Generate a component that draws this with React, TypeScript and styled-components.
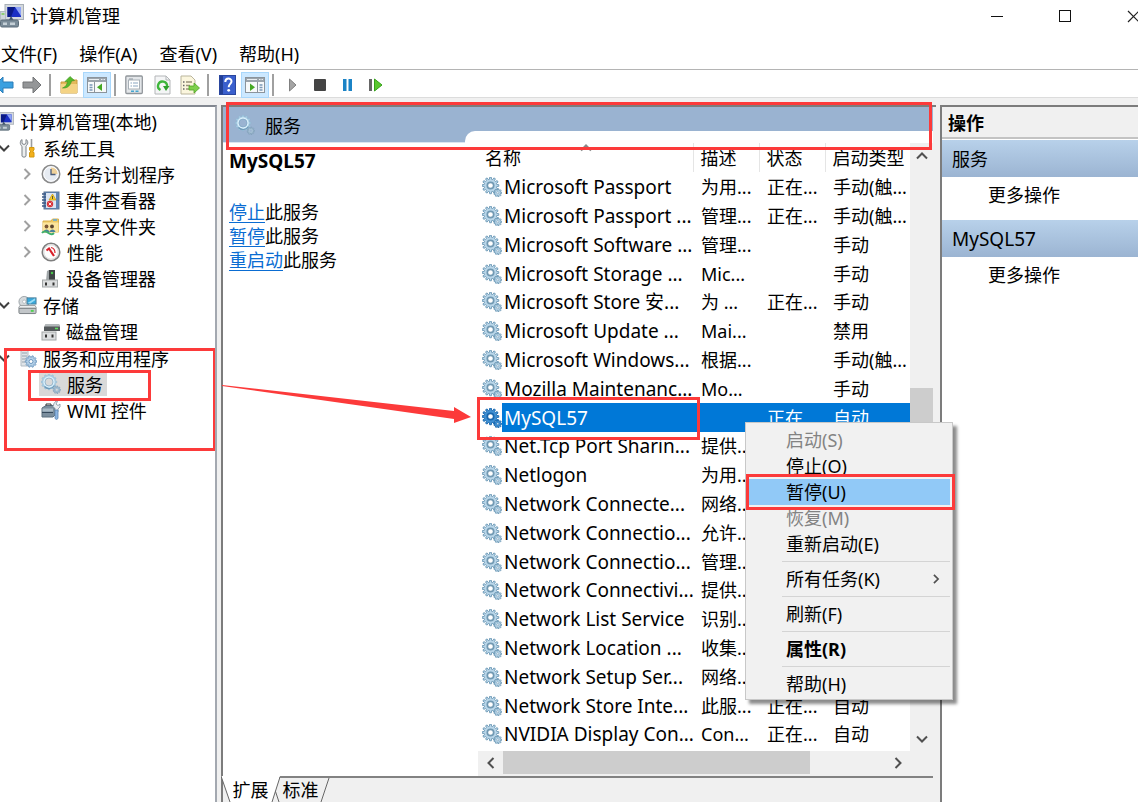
import React from "react";
import styled, { createGlobalStyle, css } from "styled-components";

const GlobalStyle = createGlobalStyle`
  * { box-sizing: border-box; }
  body {
    margin: 0;
    overflow: hidden;
    background: #fff;
    color: #000;
    font-family: "Noto Sans", "Noto Sans CJK SC", sans-serif;
    font-size: 18px;
  }
  button {
    font: inherit;
    color: inherit;
    background: none;
    border: 0;
    padding: 0;
  }
  svg { display: block; flex: none; }
  ul { list-style: none; margin: 0; padding: 0; }
`;

const markRed = "#fc3a3a";

/* ---------- window frame ---------- */

const Window = styled.div`
  position: relative;
  display: flex;
  flex-direction: column;
  height: 100vh;
  overflow: hidden;
`;

const TitleBar = styled.header`
  display: flex;
  align-items: center;
  height: 32px;
`;

const Title = styled.h1`
  flex: 1;
  margin: 0 0 0 6px;
  font-size: 18px;
  line-height: 32px;
  font-weight: 400;
`;

const WindowControls = styled.div`
  display: flex;
  margin-right: -29px;
`;

const ControlButton = styled.button`
  display: grid;
  place-items: center;
  width: 68px;
  height: 30px;
`;

const MenuBar = styled.nav`
  display: flex;
  gap: 22px;
  height: 38px;
  padding: 6px 1px 0;
  border-bottom: 1px solid #b4b4b4;
`;

const MenuBarItem = styled.button`
  height: 32px;
  line-height: 32px;
`;

const ToolBar = styled.div`
  display: flex;
  align-items: center;
  height: 28px;
  padding-top: 2px;
  margin-left: -10px;
  border-bottom: 1px solid #dcdcdc;
`;

const ToolButton = styled.button<{ $active?: boolean }>`
  display: grid;
  place-items: center;
  width: 28px;
  height: 26px;
  ${(p) => p.$active && css`
    background: #cce8ff;
    border: 1px solid #a9d7fb;
  `}
`;

const ToolDivider = styled.span`
  width: 2px;
  height: 22px;
  margin: 0 4px 0 3px;
  background: #a0a0a0;
`;

const Workspace = styled.main`
  flex: 1;
  min-height: 0;
  display: flex;
  gap: 4px;
  padding-top: 7px;
  background: #f0f0f0;
`;

/* ---------- navigation tree ---------- */

const TreePane = styled.nav`
  width: 217px;
  padding-top: 1px;
  overflow: hidden;
  background: #fff;
  border-top: 2px solid #828790;
  border-right: 2px solid #a3a8b0;
`;

const TreeList = styled.ul`
  display: flex;
  flex-direction: column;
  gap: 1px;
  margin-left: -29px;
`;

const TreeGroup = styled.li`
  position: relative;
`;

const TreeRow = styled.div<{ $depth: number }>`
  display: flex;
  align-items: center;
  height: 26px;
  padding-left: ${(p) => p.$depth * 23}px;
`;

const TreeToggle = styled.button`
  display: grid;
  place-items: center;
  width: 20px;
  height: 24px;
  margin-right: 2px;
`;

const TreeLabel = styled.a<{ $selected?: boolean }>`
  display: flex;
  align-items: center;
  gap: 6px;
  height: 24px;
  padding: 0 4px 0 2px;
  color: #000;
  text-decoration: none;
  white-space: nowrap;
  background: ${(p) => (p.$selected ? "#d9d9d9" : "transparent")};
`;

const Mark = styled.div<{ $top: number; $left: number; $width: number; $height: number }>`
  position: absolute;
  z-index: 3;
  top: ${(p) => p.$top}px;
  left: ${(p) => p.$left}px;
  width: ${(p) => p.$width}px;
  height: ${(p) => p.$height}px;
  border: 3px solid ${markRed};
  pointer-events: none;
`;

const TreeMarks = styled.div`
  position: absolute;
  z-index: 3;
  top: 0;
  left: 0;
`;

/* ---------- centre pane ---------- */

const CenterPane = styled.section`
  flex: 1;
  min-width: 0;
  display: flex;
  flex-direction: column;
  border-left: 2px solid #7c7c7c;
  border-top: 2px solid #7c7c7c;
`;

const Banner = styled.div`
  position: relative;
  display: flex;
  height: 36px;
  background: #9ab3d1;
  margin-right: 3px;
`;

const BannerTitle = styled.h2`
  display: flex;
  align-items: center;
  gap: 10px;
  width: 242px;
  margin: 0;
  padding-left: 12px;
  font-size: 18px;
  font-weight: 400;
  border-bottom: 1px solid #dbe5f0;
`;

const BannerTab = styled.div`
  flex: 1;
  align-self: flex-end;
  height: 12px;
  background: #fff;
  border-top-left-radius: 10px;
`;

const BannerMark = styled.div`
  position: absolute;
  z-index: 3;
  inset: -5px 1px -7px 3px;
  border: 3px solid ${markRed};
  pointer-events: none;
`;

const CenterBody = styled.div`
  flex: 1;
  min-height: 0;
  display: flex;
  margin-right: 3px;
  background: #fff;
  border-bottom: 2px solid #828282;
`;

const Description = styled.div`
  width: 255px;
  padding: 6px 6px 0;
  line-height: 24px;
`;

const ServiceName = styled.h3`
  margin: 0 0 27px;
  font-size: 19px;
  line-height: 24px;
  font-weight: 700;
`;

const ActionLine = styled.p`
  margin: 0;
  a {
    color: #0a6cd2;
    text-decoration: underline;
    text-underline-offset: 3px;
  }
`;

const ListPane = styled.div`
  position: relative;
  flex: 1;
  min-width: 0;
  display: flex;
  flex-direction: column;
  padding-bottom: 2px;
  background: #f0f0f0;
`;

const ListTop = styled.div`
  flex: 1;
  min-height: 0;
  display: flex;
`;

const TableWrap = styled.div`
  flex: 1;
  min-width: 0;
  background: #fff;
`;

const ServiceTable = styled.table`
  width: 100%;
  table-layout: fixed;
  border-collapse: collapse;
  white-space: nowrap;
`;

const HeadCell = styled.th<{ $width?: number }>`
  position: relative;
  height: 29px;
  width: ${(p) => (p.$width ? `${p.$width}px` : "auto")};
  padding: 0 0 0 7px;
  line-height: 28px;
  text-align: left;
  font-weight: 400;
  border-right: 1px solid #e5e5e5;
  &:last-child { border-right: 0; }
`;

const SortCaret = styled.span`
  position: absolute;
  top: -1px;
  left: 102px;
`;

const Row = styled.tr<{ $selected?: boolean }>`
  height: 29px;
  color: ${(p) => (p.$selected ? "#fff" : "#000")};
  td { background: ${(p) => (p.$selected ? "#0078d7" : "transparent")}; }
  &:nth-child(5n) { height: 28px; }
`;

const Cell = styled.td`
  padding: 0 0 0 8px;
  line-height: 28px;
`;

const NameCell = styled.th<{ $selected?: boolean }>`
  position: relative;
  padding: 0 0 0 4px;
  font-size: 19px;
  line-height: 28px;
  text-align: left;
  font-weight: 400;
  background: ${(p) => (p.$selected ? "linear-gradient(to right, #fff 24px, #0078d7 24px)" : "none")};
`;

const NameContent = styled.div`
  display: flex;
  align-items: center;
  gap: 2px;
  height: 28px;
`;

const VScroll = styled.div`
  display: flex;
  flex-direction: column;
  width: 23px;
  background: #f0f0f0;
`;

const HScroll = styled.div`
  display: flex;
  height: 23px;
  margin-right: 23px;
  background: #f0f0f0;
`;

const ScrollButton = styled.button<{ $side?: boolean }>`
  display: grid;
  place-items: center;
  width: ${(p) => (p.$side ? 25 : 23)}px;
  height: ${(p) => (p.$side ? 23 : 25)}px;
`;

const Track = styled.div<{ $grow: number; $thumb?: boolean }>`
  flex: ${(p) => p.$grow} 1 0;
  background: ${(p) => (p.$thumb ? "#cdcdcd" : "transparent")};
`;

const ViewTabs = styled.div`
  display: flex;
  height: 24px;
`;

const ViewTab = styled.button<{ $front?: boolean }>`
  position: relative;
  z-index: ${(p) => (p.$front ? 1 : 0)};
  width: 59px;
  height: ${(p) => (p.$front ? 26 : 24)}px;
  margin-left: ${(p) => (p.$front ? -2 : -9)}px;
  margin-top: ${(p) => (p.$front ? -2 : 0)}px;
  padding: ${(p) => (p.$front ? 2 : 0)}px 0 0;
  line-height: 24px;
  svg { position: absolute; z-index: -1; top: 0; left: 0; }
`;

/* ---------- context menu ---------- */

const ContextMenu = styled.div`
  position: absolute;
  z-index: 2;
  top: 279px;
  right: -20px;
  width: 208px;
  padding: 4px 2px 2px;
  color: #000;
  background: #f1f1f1;
  border: 1px solid #c8c8c8;
  box-shadow: 4px 4px 3px rgba(0, 0, 0, 0.45);
`;

const MenuItem = styled.button<{ $hot?: boolean; $strong?: boolean }>`
  position: relative;
  display: flex;
  align-items: center;
  justify-content: space-between;
  width: 100%;
  height: 26px;
  padding: 0 9px 0 38px;
  line-height: 26px;
  font-weight: ${(p) => (p.$strong ? 700 : 400)};
  background: ${(p) => (p.$hot ? "#91c9f7" : "transparent")};
  &:disabled { color: #838383; }
`;

const MenuDivider = styled.hr`
  height: 1px;
  margin: 4px 0 4px 34px;
  border: 0;
  background: #d4d4d4;
`;

/* ---------- actions pane ---------- */

const ActionsPane = styled.aside`
  width: 198px;
  background: #fff;
  border-left: 2px solid #7c7c7c;
  border-top: 2px solid #7c7c7c;
`;

const ActionsHeader = styled.h2`
  height: 32px;
  margin: 0 0 1px;
  padding-left: 6px;
  font-size: 18px;
  line-height: 32px;
  font-weight: 700;
  background: #f0f0f0;
  border-bottom: 2px solid #c3c3c3;
`;

const ActionsBand = styled.h3<{ $latin?: boolean }>`
  height: 37px;
  margin: 0;
  padding-left: 10px;
  font-size: ${(p) => (p.$latin ? 19 : 18)}px;
  line-height: 38px;
  font-weight: 400;
  background: linear-gradient(#b8d1ea, #9bb4d2);
`;

const ActionsItem = styled.button`
  display: block;
  height: 37px;
  margin: 0 0 6px;
  padding-left: 46px;
  line-height: 37px;
`;

const PointerSvg = styled.svg`
  position: absolute;
  z-index: 3;
  top: 380px;
  left: 222px;
  pointer-events: none;
`;

/* ---------- icons ---------- */

const Chevron = ({ dir, color = "#505050", size = 12 }: { dir: "up" | "down" | "left" | "right"; color?: string; size?: number }) => {
  const paths = {
    up: "M1 8.500L6 3.500L11 8.500",
    down: "M1 3.500L6 8.500L11 3.500",
    left: "M8.500 1L3.500 6L8.500 11",
    right: "M3.500 1L8.500 6L3.500 11",
  };
  return (
    <svg width={size} height={size} viewBox="0 0 12 12">
      <path d={paths[dir]} fill="none" stroke={color} strokeWidth="2" />
    </svg>
  );
};

/* Outline of a cog wheel: each tooth is four points between the root and tip circles. */
const cog = (cx: number, cy: number, tip: number, root: number, teeth: number) => {
  const step = (Math.PI * 2) / teeth;
  const points: string[] = [];
  for (let i = 0; i < teeth; i++) {
    const offsets: Array<[number, number]> = [[-0.32, root], [-0.2, tip], [0.2, tip], [0.32, root]];
    for (const [o, r] of offsets) {
      const a = (i + o) * step;
      points.push(`${(cx + r * Math.cos(a)).toFixed(2)} ${(cy + r * Math.sin(a)).toFixed(2)}`);
    }
  }
  return `M${points.join("L")}z`;
};
const bigCog = cog(8.5, 8.5, 8.3, 6.3, 12);
const smallCog = cog(15.8, 15.8, 4, 2.8, 9);

const GearsIcon = ({ tone = "#6c98b6", fill = "#b9d6e9", ring = "#7199b3", hole = "#fff" }: { tone?: string; fill?: string; ring?: string; hole?: string }) => (
  <svg width="20" height="20" viewBox="0 0 20 20">
    <path d={bigCog} fill={fill} stroke={tone} strokeWidth="0.900" />
    <circle cx="8.500" cy="8.500" r="3.200" fill={hole} stroke={ring} strokeWidth="1.700" />
    <path d={smallCog} fill={fill} stroke={tone} strokeWidth="0.900" />
    <circle cx="15.800" cy="15.800" r="1.100" fill={hole} stroke={ring} strokeWidth="0.600" />
  </svg>
);

const SoftGearsIcon = ({ hole }: { hole: string }) => (
  <svg width="20" height="20" viewBox="0 0 20 20">
    <path d={cog(8, 8, 7.8, 6.4, 12)} fill="#a9cde4" stroke="#8db6d1" strokeWidth="0.500" />
    <circle cx="8" cy="8" r="4.900" fill={hole} stroke="#d9effb" strokeWidth="1.600" />
    <circle cx="8" cy="8" r="4" fill="none" stroke="#7fa8c4" strokeWidth="0.700" />
    <path d="M3.500 12.500A6.300 6.300 0 0 0 13.500 11.500" fill="none" stroke="#6f9ab8" strokeWidth="1.200" />
    <path d={cog(15.8, 15.8, 3.8, 2.6, 9)} fill="#a3bfd3" stroke="#7f9fb7" strokeWidth="0.700" />
    <circle cx="15.800" cy="15.800" r="1" fill={hole} />
  </svg>
);

const ComputerIcon = ({ size = 24 }: { size?: number }) => (
  <svg width={size} height={size} viewBox="0 0 24 24">
    <rect x="5" y="0.500" width="18.500" height="15" fill="#d4d9de" stroke="#a8afb6" />
    <rect x="7.500" y="3" width="13.500" height="10" fill="#1a2fc4" />
    <path d="M7.500 3H15L11 13H7.500z" fill="#0b1a86" />
    <path d="M15 3h6v9z" fill="#8ea3f5" />
    <path d="M7 20l4-8 5 8z" fill="#40566c" />
    <rect x="0.500" y="7.500" width="5" height="9" fill="#cfd6da" stroke="#b3bdc2" />
    <rect x="1.500" y="9" width="3" height="2" fill="#8fcf76" />
    <rect x="0.500" y="16" width="18" height="7" rx="1.500" fill="#7b8c99" stroke="#5c6d7a" />
    <path d="M3 18.500h4v2.500H3zM10 18.500h5v2.500h-5z" fill="#c5d0d7" />
  </svg>
);

const ToolsIcon = () => (
  <svg width="19" height="20" viewBox="0 0 19 20">
    <path d="M4 1.500v4l2 1 2-1V1.500c2 1 2.500 4 .5 6l-.5.800V18c0 1.500-4 1.500-4 0V8.300C1.500 6.500 2 2.500 4 1.500z" fill="#eceeef" stroke="#7d8388" />
    <path d="M13.500 1v9" stroke="#9a9d9f" strokeWidth="1.600" />
    <path d="M11.500 9.500h4.500V12l-1 1v1.500h1V19h-4.500v-4.500h1V13l-1-1z" fill="#f2b01c" stroke="#d4990f" />
  </svg>
);

const ClockIcon = () => (
  <svg width="20" height="20" viewBox="0 0 20 20">
    <circle cx="10" cy="10" r="8.700" fill="#e6ebf2" stroke="#8a8a8a" strokeWidth="1.600" />
    <path d="M10 10V3a7 7 0 0 1 7 7z" fill="#efd19a" />
    <circle cx="10" cy="10" r="7.200" fill="none" stroke="#fff" />
    <path d="M10 5v5.500h4.500" fill="none" stroke="#4b5d7a" strokeWidth="1.300" />
  </svg>
);

const EventIcon = () => (
  <svg width="19" height="19" viewBox="0 0 19 19">
    <rect x="3" y="1" width="15" height="17" fill="#5f86b8" stroke="#5d7696" />
    <rect x="5" y="2" width="10" height="15" fill="#dbe5f2" />
    <path d="M1 3h4M1 6h4M1 9h4M1 12h4M1 15h4" stroke="#3c5a85" strokeWidth="1.300" />
    <path d="M11.500 3l3.500 6h-7z" fill="#f7cf2c" stroke="#c79a10" strokeWidth="0.700" />
    <path d="M11.500 5v3" stroke="#333" strokeWidth="0.800" />
    <circle cx="9" cy="13" r="3.200" fill="#d9343a" />
    <path d="M7.700 11.700l2.600 2.600M10.300 11.700l-2.600 2.600" stroke="#fff" strokeWidth="0.900" />
  </svg>
);

const SharedFolderIcon = () => (
  <svg width="19" height="19" viewBox="0 0 19 19">
    <path d="M2 4h8l1.500-2H17.500v13H2z" fill="#efca62" stroke="#d8b04e" />
    <path d="M12 3h4" stroke="#58a9e0" strokeWidth="1.500" />
    <path d="M2 5.500h15.500V15.500H2z" fill="#fbe49c" />
    <circle cx="5.500" cy="9.500" r="1.900" fill="#7a5636" />
    <circle cx="11" cy="9.500" r="1.900" fill="#5c4630" />
    <path d="M2.500 15c.5-3.500 5.500-3.500 6 0zM8.500 15c.5-3.500 5.500-3.500 6 0z" fill="#4c7f9c" />
    <path d="M1 16c2-2.500 4.500-1.500 6.500 0s4 1.500 5.500 0" fill="none" stroke="#3fae6d" strokeWidth="2" />
  </svg>
);

const PerformanceIcon = () => (
  <svg width="20" height="20" viewBox="0 0 20 20">
    <circle cx="10" cy="10" r="8.700" fill="#fdfdfd" stroke="#7e7e7e" strokeWidth="1.600" />
    <circle cx="10" cy="10" r="7.200" fill="none" stroke="#d8d8d8" />
    <path d="M5.500 8.500L8 6.500l5 7.500" fill="none" stroke="#d8202a" strokeWidth="2.200" />
    <path d="M10 5.500c2.500.500 4 2.500 4 5.500" fill="none" stroke="#d8202a" strokeWidth="1.200" />
  </svg>
);

const DeviceIcon = () => (
  <svg width="19" height="19" viewBox="0 0 19 19">
    <path d="M8 1h6v11H7z" fill="#3f4445" />
    <path d="M6 2l2-1v11H5z" fill="#a0a6a8" />
    <circle cx="11" cy="4" r="1.200" fill="#49c94a" />
    <rect x="1.500" y="11" width="15" height="7" fill="#dcdedf" stroke="#a3a7a8" />
    <path d="M4 13.500h2v3H4zM11.500 13.500h2v3h-2z" fill="#333" />
  </svg>
);

const StorageIcon = () => (
  <svg width="19" height="20" viewBox="0 0 20 20">
    <circle cx="6.500" cy="6.500" r="5.500" fill="#d5dadd" stroke="#9aa1a5" />
    <circle cx="6.500" cy="6.500" r="1.700" fill="#fff" stroke="#9aa1a5" strokeWidth="0.600" />
    <rect x="9.500" y="2.500" width="9.500" height="6.500" fill="#39a9dc" stroke="#4d7f99" />
    <path d="M10 8l8-5v2l-5 3.500z" fill="#9adcf5" />
    <path d="M2 10.500h16l1.500 3h-19z" fill="#eceeef" stroke="#9a9fa2" />
    <rect x="1" y="13.500" width="18" height="5.500" rx="1" fill="#c2c6c9" stroke="#777c80" />
    <path d="M13.500 16.200h3" stroke="#4fd14f" strokeWidth="2" />
  </svg>
);

const DiskIcon = () => (
  <svg width="19" height="19" viewBox="0 0 19 19">
    <path d="M5 2h13l1 3v4H3V5z" fill="#54595b" />
    <path d="M5 2h13l1 2.500H3z" fill="#b3b8ba" />
    <path d="M14 6.500h3" stroke="#5fe05f" strokeWidth="1.500" />
    <rect x="1" y="10" width="14" height="8" fill="#dcdedf" stroke="#a3a7a8" />
    <path d="M4 12.500h2v3H4zM10.500 12.500h2v3h-2z" fill="#333" />
  </svg>
);

const AppsIcon = () => (
  <svg width="19" height="19" viewBox="0 0 19 19">
    <path d="M3 1h7v16H3z" fill="#dfe4e8" stroke="#b3bcc3" />
    <path d="M4 4h5M4 7h5M4 10h4M4 13h3" stroke="#98a4ad" strokeWidth="1.200" />
    <path d={cog(13, 12.5, 5.8, 4.3, 10)} fill="#b5d1e8" stroke="#6c97bf" strokeWidth="0.900" />
    <circle cx="13" cy="12.500" r="2" fill="#fff" stroke="#6c97bf" />
  </svg>
);

const WmiIcon = () => (
  <svg width="20" height="20" viewBox="0 0 20 20">
    <path d="M1 8l4-2.500h9v9.500l-2 2H1z" fill="#7b8e9d" stroke="#5b6e7d" />
    <path d="M1.500 8.500h10.500v3H1.500z" fill="#a9bac6" />
    <path d="M5 5.500V4h5v1.500" fill="none" stroke="#333" />
    <path d="M1 12.500h11" stroke="#34485a" />
    <path d="M13 3.500L15 1l1.500.500L15 4l2 1.500L19 4v3l-2 2v3h-3V8.500l-2-2z" fill="#e9edf0" stroke="#7d8f9e" strokeWidth="0.800" />
    <path d="M14 10h3v8.500l-1.500 1-1.500-1z" fill="#8db5e0" stroke="#5b86b5" strokeWidth="0.800" />
  </svg>
);

const ArrowIcon = ({ back }: { back?: boolean }) => (
  <svg width="20" height="18" viewBox="0 0 20 18">
    <path
      d={back ? "M1 9l8-8v5h10v6H9v5z" : "M19 9l-8-8v5H1v6h10v5z"}
      fill={back ? "#3ba0e0" : "#949698"}
      stroke={back ? "#2a7db8" : "#737577"}
    />
  </svg>
);

const UpFolderIcon = () => (
  <svg width="20" height="20" viewBox="0 0 20 20">
    <path d="M2 7h6l2-2h8v13H2z" fill="#e3b95c" stroke="#c99d3c" />
    <path d="M2 9h16v9H2z" fill="#f4d385" />
    <path d="M3.500 13c3-1 4.500-3.500 5-6.500L6 6.500l5-5 4.500 4-3 .500C11.500 10.500 8.500 13.500 3.500 13z" fill="#55b82c" stroke="#3f9620" strokeWidth="0.600" />
  </svg>
);

const PanelIcon = ({ right }: { right?: boolean }) => (
  <svg width="20" height="18" viewBox="0 0 20 18">
    <rect x="0.500" y="1.500" width="19" height="15" fill="#f7f9fa" stroke="#8b949c" />
    <path d="M1 2h18v4H1z" fill="#9ba4ac" />
    <path d="M2 3.500h10M14 3.500h1.500M16.500 3.500h1.500" stroke="#e9edf0" />
    <path d={right ? "M12.500 6v10" : "M7.500 6v10"} stroke="#8b949c" />
    <path d={right ? "M14.500 9h3M14.500 11.500h3M14.500 14h3" : "M2.500 9h3M2.500 11.500h3M2.500 14h3"} stroke="#7b99b8" strokeWidth="1.300" />
    <path d={right ? "M5 7.500l5 3.700-5 3.700z" : "M15 7.500l-5 3.700 5 3.700z"} fill="#45a823" />
  </svg>
);

const PropertiesIcon = () => (
  <svg width="18" height="20" viewBox="0 0 18 20">
    <rect x="0.800" y="1" width="16.500" height="17.500" rx="1" fill="#e3e6e9" stroke="#91969b" strokeWidth="1.300" />
    <rect x="3.500" y="5" width="11" height="9" fill="#fff" stroke="#a8b0b7" />
    <path d="M4 4h4" stroke="#8d979f" />
    <path d="M5.500 8h1.500M8 8h5M5.500 11h1.500M8 11h5" stroke="#8aa6c2" strokeWidth="1.200" />
    <path d="M6 16.300h3M10.500 16.300h3" stroke="#45a5cf" strokeWidth="1.500" />
  </svg>
);

const RefreshIcon = () => (
  <svg width="17" height="20" viewBox="0 0 17 20">
    <path d="M1 1h11l4 4v14H1z" fill="#f4f5f6" stroke="#b3b6b8" />
    <path d="M12 1v4h4" fill="none" stroke="#b3b6b8" />
    <path d="M6.500 15A4.500 4.500 0 1 1 13 11.500" fill="none" stroke="#3fb63c" strokeWidth="2.400" />
    <path d="M9 11h6.500l-3.500 5z" fill="#2ea12c" />
  </svg>
);

const ExportIcon = () => (
  <svg width="20" height="20" viewBox="0 0 20 20">
    <path d="M1 1h10l4 4v14H1z" fill="#fbf6de" stroke="#bab59c" />
    <path d="M3 7h1.500M3 10.500h1.500M3 14h1.500" stroke="#666" strokeWidth="1.500" />
    <path d="M6 7h6M6 10.500h4M6 14h5" stroke="#9a927a" strokeWidth="1.300" />
    <path d="M9 11h5V8l5.500 5-5.500 5v-3H9z" fill="#7ed04c" stroke="#4fa524" strokeWidth="0.800" />
  </svg>
);

const HelpIcon = () => (
  <svg width="17" height="20" viewBox="0 0 17 20">
    <rect x="0.500" y="0.500" width="16" height="19" fill="#3a5fcd" stroke="#2a469e" />
    <path d="M1 1h3v18H1z" fill="#233f94" />
    <path d="M6.300 7c0-4.500 6.200-4.300 6.200-.8 0 2.600-2.800 2.800-2.800 6" fill="none" stroke="#fff" strokeWidth="2" />
    <circle cx="9.700" cy="15.300" r="1.400" fill="#fff" />
  </svg>
);

const PlayIcon = () => (
  <svg width="20" height="16" viewBox="0 0 20 16">
    <path d="M7.500 2l6.500 6-6.500 6z" fill="#a5a5a5" stroke="#808080" />
  </svg>
);
const StopIcon = () => (
  <svg width="13" height="12" viewBox="0 0 13 12">
    <rect width="12" height="12" rx="1" fill="#444" />
  </svg>
);
const PauseIcon = () => (
  <svg width="12" height="12" viewBox="0 0 12 12">
    <path d="M1 0h3.500v12H1zM6.500 0H10v12H6.500z" fill="#1b83c6" />
  </svg>
);
const RestartIcon = () => (
  <svg width="16" height="14" viewBox="0 0 16 14">
    <rect x="1" y="1" width="3" height="12" fill="#666" />
    <path d="M6.500 1l7.500 6-7.500 6z" fill="#5ac72f" stroke="#35a01a" />
  </svg>
);

/* ---------- data ---------- */

const tools: Array<{ label: string; icon: React.ReactNode; active?: boolean } | null> = [
  { label: "后退", icon: <ArrowIcon back /> },
  { label: "前进", icon: <ArrowIcon /> },
  null,
  { label: "向上", icon: <UpFolderIcon /> },
  { label: "控制台树", icon: <PanelIcon />, active: true },
  null,
  { label: "属性", icon: <PropertiesIcon /> },
  { label: "刷新", icon: <RefreshIcon /> },
  { label: "导出列表", icon: <ExportIcon /> },
  null,
  { label: "帮助", icon: <HelpIcon /> },
  { label: "操作窗格", icon: <PanelIcon right />, active: true },
  null,
  { label: "启动", icon: <PlayIcon /> },
  { label: "停止", icon: <StopIcon /> },
  { label: "暂停", icon: <PauseIcon /> },
  { label: "重新启动", icon: <RestartIcon /> },
];

type TreeNode = {
  label: string;
  depth: number;
  icon: React.ReactNode;
  toggle?: "open" | "closed";
  selected?: boolean;
};

const treeGroups: TreeNode[][] = [
  [{ label: "计算机管理(本地)", depth: 0, icon: <ComputerIcon size={19} /> }],
  [
    { label: "系统工具", depth: 1, icon: <ToolsIcon />, toggle: "open" },
    { label: "任务计划程序", depth: 2, icon: <ClockIcon />, toggle: "closed" },
    { label: "事件查看器", depth: 2, icon: <EventIcon />, toggle: "closed" },
    { label: "共享文件夹", depth: 2, icon: <SharedFolderIcon />, toggle: "closed" },
    { label: "性能", depth: 2, icon: <PerformanceIcon />, toggle: "closed" },
    { label: "设备管理器", depth: 2, icon: <DeviceIcon /> },
  ],
  [
    { label: "存储", depth: 1, icon: <StorageIcon />, toggle: "open" },
    { label: "磁盘管理", depth: 2, icon: <DiskIcon /> },
  ],
  [
    { label: "服务和应用程序", depth: 1, icon: <AppsIcon />, toggle: "open" },
    { label: "服务", depth: 2, icon: <SoftGearsIcon hole="#d9d9d9" />, selected: true },
    { label: "WMI 控件", depth: 2, icon: <WmiIcon /> },
  ],
];

const services: Array<[string, string, string, string]> = [
  ["Microsoft Passport", "为用...", "正在...", "手动(触..."],
  ["Microsoft Passport ...", "管理...", "正在...", "手动(触..."],
  ["Microsoft Software ...", "管理...", "", "手动"],
  ["Microsoft Storage ...", "Mic...", "", "手动"],
  ["Microsoft Store 安...", "为 ...", "正在...", "手动"],
  ["Microsoft Update ...", "Mai...", "", "禁用"],
  ["Microsoft Windows...", "根据...", "", "手动(触..."],
  ["Mozilla Maintenanc...", "Mo...", "", "手动"],
  ["MySQL57", "", "正在...", "自动"],
  ["Net.Tcp Port Sharin...", "提供...", "", ""],
  ["Netlogon", "为用...", "", ""],
  ["Network Connecte...", "网络...", "", ""],
  ["Network Connectio...", "允许...", "", ""],
  ["Network Connectio...", "管理...", "", ""],
  ["Network Connectivi...", "提供...", "", ""],
  ["Network List Service", "识别...", "", ""],
  ["Network Location ...", "收集...", "", ""],
  ["Network Setup Ser...", "网络...", "", ""],
  ["Network Store Inte...", "此服...", "正在...", "自动"],
  ["NVIDIA Display Con...", "Con...", "正在...", "自动"],
];

export default function App() {
  return (
    <>
      <GlobalStyle />
      <Window>
        <TitleBar>
          <ComputerIcon size={24} />
          <Title>计算机管理</Title>
          <WindowControls>
            <ControlButton aria-label="最小化">
              <svg width="13" height="13" viewBox="0 0 13 13"><path d="M0 6.500h12" stroke="#111" /></svg>
            </ControlButton>
            <ControlButton aria-label="最大化">
              <svg width="13" height="13" viewBox="0 0 13 13"><rect x="0.500" y="0.500" width="11" height="11" fill="none" stroke="#111" /></svg>
            </ControlButton>
            <ControlButton aria-label="关闭">
              <svg width="13" height="13" viewBox="0 0 13 13"><path d="M1 1l11 11M12 1L1 12" stroke="#222" strokeWidth="1.200" /></svg>
            </ControlButton>
          </WindowControls>
        </TitleBar>

        <MenuBar>
          {["文件(F)", "操作(A)", "查看(V)", "帮助(H)"].map((m) => (
            <MenuBarItem key={m}>{m}</MenuBarItem>
          ))}
        </MenuBar>

        <ToolBar role="toolbar">
          {tools.map((t, i) =>
            t ? (
              <ToolButton key={i} aria-label={t.label} $active={t.active}>{t.icon}</ToolButton>
            ) : (
              <ToolDivider key={i} />
            )
          )}
        </ToolBar>

        <Workspace>
          <TreePane>
            <TreeList>
              {treeGroups.map((group, g) => (
                <TreeGroup key={g}>
                  {group.map((n) => (
                    <TreeRow key={n.label} $depth={n.depth}>
                      <TreeToggle as={n.toggle ? "button" : "span"} aria-label={n.toggle && `展开 ${n.label}`}>
                        {n.toggle && (
                          <Chevron dir={n.toggle === "open" ? "down" : "right"} color={n.toggle === "open" ? "#404040" : "#a0a0a0"} />
                        )}
                      </TreeToggle>
                      <TreeLabel href="#" $selected={n.selected}>
                        {n.icon}
                        {n.label}
                      </TreeLabel>
                    </TreeRow>
                  ))}
                  {g === 3 && (
                    <TreeMarks>
                      <Mark $top={3} $left={33} $width={212} $height={103} />
                      <Mark $top={25} $left={57} $width={123} $height={31} />
                    </TreeMarks>
                  )}
                </TreeGroup>
              ))}
            </TreeList>
          </TreePane>

          <CenterPane>
            <Banner>
              <BannerTitle>
                <SoftGearsIcon hole="#9ab3d1" />
                服务
              </BannerTitle>
              <BannerTab />
              <BannerMark />
            </Banner>
            <CenterBody>
              <Description>
                <ServiceName>MySQL57</ServiceName>
                <ActionLine><a href="#">停止</a>此服务</ActionLine>
                <ActionLine><a href="#">暂停</a>此服务</ActionLine>
                <ActionLine><a href="#">重启动</a>此服务</ActionLine>
              </Description>
              <ListPane>
                <ListTop>
                  <TableWrap>
                    <ServiceTable>
                      <thead>
                        <tr>
                          <HeadCell scope="col">
                            名称
                            <SortCaret><Chevron dir="up" color="#888" size={12} /></SortCaret>
                          </HeadCell>
                          <HeadCell scope="col" $width={66}>描述</HeadCell>
                          <HeadCell scope="col" $width={66}>状态</HeadCell>
                          <HeadCell scope="col" $width={85}>启动类型</HeadCell>
                        </tr>
                      </thead>
                      <tbody>
                        {services.map(([name, desc, state, startup], i) => {
                          const selected = name === "MySQL57";
                          return (
                            <Row key={i} $selected={selected}>
                              <NameCell scope="row" $selected={selected}>
                                <NameContent>
                                  {selected ? <GearsIcon tone="#1766ad" fill="#3f8fd2" ring="#1766ad" /> : <GearsIcon />}
                                  {name}
                                </NameContent>
                                {selected && <Mark $top={-6} $left={-1} $width={223} $height={43} />}
                              </NameCell>
                              <Cell>{desc}</Cell>
                              <Cell>{state}</Cell>
                              <Cell>{startup}</Cell>
                            </Row>
                          );
                        })}
                      </tbody>
                    </ServiceTable>
                  </TableWrap>
                  <VScroll>
                    <ScrollButton aria-label="向上滚动"><Chevron dir="up" /></ScrollButton>
                    <Track $grow={220} />
                    <Track $grow={60} $thumb />
                    <Track $grow={278} />
                    <ScrollButton aria-label="向下滚动"><Chevron dir="down" /></ScrollButton>
                  </VScroll>
                </ListTop>
                <HScroll>
                  <ScrollButton $side aria-label="向左滚动"><Chevron dir="left" /></ScrollButton>
                  <Track $grow={307} $thumb />
                  <Track $grow={75} />
                  <ScrollButton $side aria-label="向右滚动"><Chevron dir="right" /></ScrollButton>
                </HScroll>

                <ContextMenu role="menu">
                  <MenuItem role="menuitem" disabled>启动(S)</MenuItem>
                  <MenuItem role="menuitem">停止(O)</MenuItem>
                  <MenuItem role="menuitem" $hot>
                    暂停(U)
                    <Mark $top={-5} $left={-2} $width={209} $height={36} />
                  </MenuItem>
                  <MenuItem role="menuitem" disabled>恢复(M)</MenuItem>
                  <MenuItem role="menuitem">重新启动(E)</MenuItem>
                  <MenuDivider />
                  <MenuItem role="menuitem">所有任务(K)<Chevron dir="right" size={10} /></MenuItem>
                  <MenuDivider />
                  <MenuItem role="menuitem">刷新(F)</MenuItem>
                  <MenuDivider />
                  <MenuItem role="menuitem" $strong>属性(R)</MenuItem>
                  <MenuDivider />
                  <MenuItem role="menuitem">帮助(H)</MenuItem>
                </ContextMenu>
              </ListPane>
            </CenterBody>
            <ViewTabs>
              <ViewTab $front>
                <svg width="59" height="26" viewBox="0 0 59 26">
                  <path d="M0 0L9 26H51L59 0z" fill="#fff" />
                  <path d="M0 0L9 26M59 1L51 26" stroke="#666" fill="none" />
                </svg>
                扩展
              </ViewTab>
              <ViewTab>
                <svg width="59" height="24" viewBox="0 0 59 24">
                  <path d="M4 12L8 24M58 0L50 24" stroke="#666" fill="none" />
                </svg>
                标准
              </ViewTab>
            </ViewTabs>
          </CenterPane>

          <ActionsPane>
            <ActionsHeader>操作</ActionsHeader>
            <ActionsBand>服务</ActionsBand>
            <ActionsItem>更多操作</ActionsItem>
            <ActionsBand $latin>MySQL57</ActionsBand>
            <ActionsItem>更多操作</ActionsItem>
          </ActionsPane>
        </Workspace>

        <PointerSvg width="250" height="46" viewBox="0 0 250 46">
          <path d="M0 5V6L232 39V43L249 37L232 27V31z" fill={markRed} />
        </PointerSvg>
      </Window>
    </>
  );
}
